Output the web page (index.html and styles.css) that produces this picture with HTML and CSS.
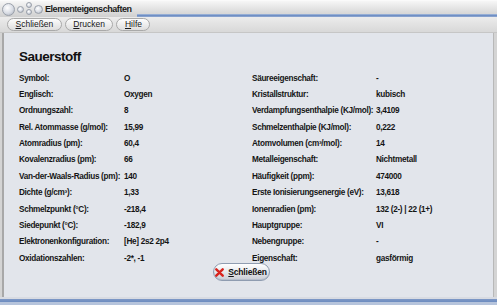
FILE: index.html
```html
<!DOCTYPE html>
<html lang="de">
<head>
    <meta charset="UTF-8">
    <title>Elementeigenschaften</title>
    <link rel="stylesheet" href="styles.css">
</head>
<body>
    <div class="window">
        <div class="titlebar">
            <div class="orbs">
                <span class="orb big"></span>
                <span class="orb small"></span>
                <span class="orb-pair"><span class="orb tiny"></span><span class="orb tiny"></span></span>
                <span class="orb mid"></span>
            </div>
            <span class="title">Elementeigenschaften</span>
            <div class="title-line"></div>
        </div>
        <div class="menubar">
            <button class="menu-btn"><u>S</u>chließen</button>
            <button class="menu-btn"><u>D</u>rucken</button>
            <button class="menu-btn"><u>H</u>ilfe</button>
        </div>
        <div class="content">
            <h1>Sauerstoff</h1>
            <div class="props">
                <div class="col">
                    <div class="row"><span class="lbl">Symbol:</span><span>O</span></div>
                    <div class="row"><span class="lbl">Englisch:</span><span>Oxygen</span></div>
                    <div class="row"><span class="lbl">Ordnungszahl:</span><span>8</span></div>
                    <div class="row"><span class="lbl">Rel. Atommasse (g/mol):</span><span>15,99</span></div>
                    <div class="row"><span class="lbl">Atomradius (pm):</span><span>60,4</span></div>
                    <div class="row"><span class="lbl">Kovalenzradius (pm):</span><span>66</span></div>
                    <div class="row"><span class="lbl">Van-der-Waals-Radius (pm):</span><span>140</span></div>
                    <div class="row"><span class="lbl">Dichte (g/cm³):</span><span>1,33</span></div>
                    <div class="row"><span class="lbl">Schmelzpunkt (°C):</span><span>-218,4</span></div>
                    <div class="row"><span class="lbl">Siedepunkt (°C):</span><span>-182,9</span></div>
                    <div class="row"><span class="lbl">Elektronenkonfiguration:</span><span>[He] 2s2 2p4</span></div>
                    <div class="row"><span class="lbl">Oxidationszahlen:</span><span>-2*, -1</span></div>
                </div>
                <div class="col right">
                    <div class="row"><span class="lbl">Säureeigenschaft:</span><span>-</span></div>
                    <div class="row"><span class="lbl">Kristallstruktur:</span><span>kubisch</span></div>
                    <div class="row"><span class="lbl">Verdampfungsenthalpie (KJ/mol):</span><span>3,4109</span></div>
                    <div class="row"><span class="lbl">Schmelzenthalpie (KJ/mol):</span><span>0,222</span></div>
                    <div class="row"><span class="lbl">Atomvolumen (cm³/mol):</span><span>14</span></div>
                    <div class="row"><span class="lbl">Metalleigenschaft:</span><span>Nichtmetall</span></div>
                    <div class="row"><span class="lbl">Häufigkeit (ppm):</span><span>474000</span></div>
                    <div class="row"><span class="lbl">Erste Ionisierungsenergie (eV):</span><span>13,618</span></div>
                    <div class="row"><span class="lbl">Ionenradien (pm):</span><span>132 (2-) | 22 (1+)</span></div>
                    <div class="row"><span class="lbl">Hauptgruppe:</span><span>VI</span></div>
                    <div class="row"><span class="lbl">Nebengruppe:</span><span>-</span></div>
                    <div class="row"><span class="lbl">Eigenschaft:</span><span>gasförmig</span></div>
                </div>
            </div>
            <div class="actions">
                <button class="close-btn">
                    <svg width="9" height="9" viewBox="0 0 9 9"><path d="M1.3 1.3L7.7 7.7M7.7 1.3L1.3 7.7" stroke="#d8231c" stroke-width="2.4" stroke-linecap="round"/></svg>
                    <span><u>S</u>chließen</span>
                </button>
            </div>
        </div>
        <div class="statusbar"></div>
    </div>
</body>
</html>
```
FILE: styles.css
```css
*{box-sizing:border-box;margin:0;padding:0}
body{font-family:"Liberation Sans",Arial,sans-serif;background:#d6d6d6;width:497px;height:305px;overflow:hidden}
.window{width:497px;height:305px;display:flex;flex-direction:column;background:#d4d4d4}
.titlebar{height:17px;display:flex;align-items:center;background:linear-gradient(#f6f6f6,#dedede 60%,#d0d0d0);border-top:1px solid #fafafa}
.orbs{display:flex;align-items:center;gap:2px;padding-left:2px;height:16px}
.orb{display:block;border-radius:50%;background:radial-gradient(circle at 40% 35%,#fff,#d8dce4 55%,#a2a8b4);border:1px solid #9aa0aa}
.orb.big{width:13px;height:13px}
.orb.small{width:7px;height:7px}
.orb.tiny{width:6px;height:6px}
.orb.mid{width:9px;height:9px}
.orb-pair{display:flex;flex-direction:column;gap:1px;margin-top:-2px}
.title{font-size:9px;font-weight:bold;color:#1a1a1a;margin-left:2px;letter-spacing:-0.45px}
.title-line{flex:1;height:3px;margin-left:5px;align-self:flex-end;background:linear-gradient(#a8bcdc,#6f8fc4 50%,#93aad2)}
.menubar{height:16px;display:flex;align-items:center;gap:3px;padding-left:7px;background:linear-gradient(#ececec,#d8d8d8);border-bottom:1px solid #c6c6c6}
.menu-btn{font-family:inherit;font-size:8.5px;color:#1a1a1a;height:13px;padding:0 7.5px;border-radius:7px;border:1px solid #a9a9a9;background:linear-gradient(#fdfdfd,#dedede);line-height:11px}
.menu-btn u{text-decoration:underline}
.content{flex:1;margin:0 3px 0 2px;border-left:2px solid #a8a8a8;border-right:1px solid #b8b8b8;background:#e2e5eb;padding:16px 0 0 15px;display:flex;flex-direction:column}
h1{font-size:13.5px;font-weight:bold;color:#111;height:21px;letter-spacing:-0.5px}
.props{display:flex;font-size:8.2px;font-weight:bold;color:#151515;letter-spacing:-0.3px}
.col{width:233px;display:flex;flex-direction:column}
.col.right{width:240px}
.row{height:16.36px;display:flex;align-items:center}
.lbl{width:105px;flex:none;white-space:nowrap}
.right .lbl{width:124px}
.actions{display:flex;justify-content:center}
.close-btn{display:flex;align-items:center;gap:4px;font-family:inherit;font-size:8.5px;font-weight:bold;color:#111;height:18px;width:57px;justify-content:center;border-radius:9px;border:1px solid #8f9cb0;background:linear-gradient(#ffffff,#e4e6ea 55%,#c9ccd3);box-shadow:inset 0 -1px 0 #b7bfcc;margin:-3px 0 0 -30px;letter-spacing:-0.2px}
.statusbar{height:8px;background:linear-gradient(#d8dbe2 0,#d8dbe2 2px,#7e98c6 2px,#6c8cc0 5px,#b6c4dc 5px)}
```
